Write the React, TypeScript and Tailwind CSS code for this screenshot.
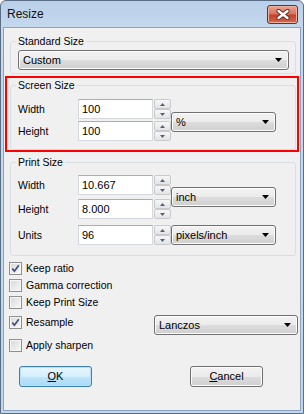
import React from "react";

function Combo({ text, className = "" }: { text: string; className?: string }) {
  return (
    <div
      className={`flex h-[20px] items-center justify-between rounded-[3px] border border-[#707070] bg-[linear-gradient(#f2f2f2,#ebebeb_50%,#dddddd_50%,#cfcfcf)] pl-[4px] pr-[6px] shadow-[inset_0_0_0_1px_#fcfcfc] ${className}`}
    >
      <span className="text-[11px] leading-[18px]">{text}</span>
      <svg width="7" height="4" viewBox="0 0 7 4">
        <path d="M0 0h7L3.5 4z" fill="#000" />
      </svg>
    </div>
  );
}

function Spin() {
  return (
    <div className="ml-[1px] flex h-[20px] w-[17px] flex-col">
      <div className="flex h-[10px] items-center justify-center rounded-[2px] border border-[#c8cacd] bg-[linear-gradient(#f7f7f7,#e4e4e4)]">
        <svg width="5" height="3" viewBox="0 0 5 3">
          <path d="M2.5 0L5 3H0z" fill="#4d6185" />
        </svg>
      </div>
      <div className="flex h-[10px] items-center justify-center rounded-[2px] border border-[#c8cacd] bg-[linear-gradient(#f7f7f7,#e4e4e4)]">
        <svg width="5" height="3" viewBox="0 0 5 3">
          <path d="M0 0h5L2.5 3z" fill="#4d6185" />
        </svg>
      </div>
    </div>
  );
}

function Row({ label, value }: { label: string; value: string }) {
  return (
    <div className="flex h-[20px] items-center">
      <span className="w-[60px]">{label}</span>
      <div className="h-[20px] w-[75px] border border-[#d5d8de] border-t-[#abadb3] bg-white pl-[3px] text-[11px] leading-[18px]">
        {value}
      </div>
      <Spin />
    </div>
  );
}

function Check({ checked, label }: { checked?: boolean; label: string }) {
  return (
    <div className="flex h-[17px] items-center gap-[4px]">
      <span className="flex h-[13px] w-[13px] items-center justify-center border border-[#8e8f8f] bg-[linear-gradient(135deg,#d8d8d8,#f9f9f9)] shadow-[inset_0_0_0_1px_#f6f6f6]">
        {checked && (
          <svg width="9" height="9" viewBox="0 0 9 9">
            <path d="M1.3 4.6L3.4 7.2L7.8 1.2" fill="none" stroke="#3b4e86" strokeWidth="1.7" />
          </svg>
        )}
      </span>
      <span>{label}</span>
    </div>
  );
}

export default function App() {
  return (
    <div className="h-[414px] w-[306px] bg-white font-['Liberation_Sans',Arial,sans-serif] text-[10.5px] leading-[13px] text-black">
      <div className="flex h-[414px] w-[304px] flex-col rounded-t-[6px] border border-[#5b6d84] bg-[linear-gradient(#b9d0e9,#c6d9ee_30px,#c2d7ee)] px-[2px] pb-[2px]">
        <div className="flex h-[26px] items-start justify-between">
          <span className="pl-[4px] pt-[6px] text-[12px] leading-[14px] text-[#111]">Resize</span>
          <div className="mr-[3px] mt-[4px] flex h-[19px] w-[31px] items-center justify-center rounded-[3px] border border-[#6e2c25] bg-[linear-gradient(#eaa697,#d8735f_45%,#c4432c_55%,#d3694e)] shadow-[inset_0_0_0_1px_#efb2a2]">
            <svg width="14" height="11" viewBox="0 0 14 11">
              <path d="M2.5 2L11.5 9M11.5 2L2.5 9" stroke="#5a2a22" strokeWidth="4.2" strokeLinecap="round" />
              <path d="M2.5 2L11.5 9M11.5 2L2.5 9" stroke="#fff" strokeWidth="2.4" strokeLinecap="round" />
            </svg>
          </div>
        </div>

        <div className="flex flex-1 flex-col border border-[#8aa3c0] bg-[#f0f0f0]">
          <fieldset className="ml-[6px] mt-[7px] w-[286px] rounded-[3px] border border-[#d5dfe5] pb-[3px] pl-[7px] pr-[6px]">
            <legend className="-ml-[2px] px-[2px]">Standard Size</legend>
            <Combo text="Custom" className="mt-[2px]" />
          </fieldset>

          <div className="ml-[1px] mt-[2px] w-[294px] border-2 border-[#ff0000]">
            <fieldset className="ml-[3px] mt-[1px] w-[286px] rounded-[3px] border border-[#d5dfe5] pb-[8px] pl-[7px]">
              <legend className="-ml-[2px] px-[2px]">Screen Size</legend>
              <div className="mt-[7px] flex items-center">
                <div className="flex flex-col gap-[2px]">
                  <Row label="Width" value="100" />
                  <Row label="Height" value="100" />
                </div>
                <Combo text="%" className="mt-[4px] w-[105px]" />
              </div>
            </fieldset>
          </div>

          <fieldset className="ml-[6px] mt-[4px] w-[286px] rounded-[3px] border border-[#d5dfe5] pb-[10px] pl-[7px]">
            <legend className="-ml-[2px] px-[2px]">Print Size</legend>
            <div className="mt-[6px] flex items-center">
              <div className="flex flex-col gap-[4px]">
                <Row label="Width" value="10.667" />
                <Row label="Height" value="8.000" />
              </div>
              <Combo text="inch" className="w-[105px]" />
            </div>
            <div className="mt-[6px] flex items-center">
              <Row label="Units" value="96" />
              <Combo text="pixels/inch" className="w-[105px]" />
            </div>
          </fieldset>

          <div className="ml-[5px] mt-[4px] flex flex-col">
            <Check checked label="Keep ratio" />
            <Check label="Gamma correction" />
            <Check label="Keep Print Size" />
            <div className="mt-[3px] flex items-start">
              <Check checked label="Resample" />
              <Combo text="Lanczos" className="ml-auto mr-[2px] mt-[1px] w-[144px]" />
            </div>
            <div className="mt-[2px]">
              <Check label="Apply sharpen" />
            </div>
          </div>

          <div className="mt-[12px] flex">
            <button className="ml-[15px] h-[21px] w-[73px] rounded-[3px] border border-[#3c7fb1] bg-[linear-gradient(#e8f6fd,#d6effc_50%,#bfe5f9_50%,#a9daf5)] text-[11px] leading-[19px] shadow-[inset_0_0_0_1px_#b6e3fa]">
              <span className="underline underline-offset-1">O</span>K
            </button>
            <button className="ml-[98px] h-[21px] w-[73px] rounded-[3px] border border-[#707070] bg-[linear-gradient(#f2f2f2,#ebebeb_50%,#dddddd_50%,#cfcfcf)] text-[11px] leading-[19px] shadow-[inset_0_0_0_1px_#fcfcfc]">
              <span className="underline underline-offset-1">C</span>ancel
            </button>
          </div>
        </div>
      </div>
    </div>
  );
}
